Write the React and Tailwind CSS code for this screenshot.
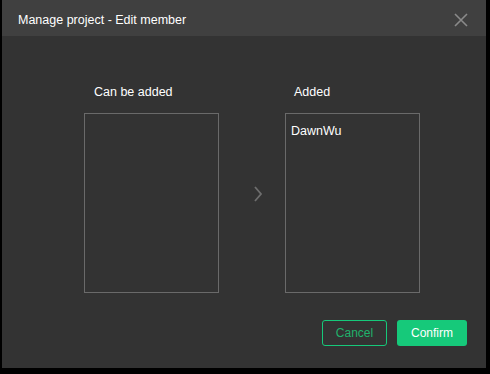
import React from "react";

export default function App() {
  return (
    <div className="w-[490px] h-[374px] bg-black" style={{ fontFamily: '"Liberation Sans", Arial, sans-serif' }}>
      <div className="ml-[2px] w-[484px] h-[368px] bg-[#333333] flex flex-col">
        <div className="h-[36px] bg-[#404040] flex items-center justify-between pl-[16px] pr-[18px] pt-[4px]">
          <span className="text-[12.5px] text-white">Manage project - Edit member</span>
          <svg width="14" height="14" viewBox="0 0 14 14" className="text-[#8a8a8a]">
            <path d="M1 1L13 13M13 1L1 13" stroke="currentColor" strokeWidth="1.6" />
          </svg>
        </div>
        <div className="flex pt-[50px] pl-[82px]">
          <div className="flex flex-col">
            <div className="h-[13px] leading-[13px] pl-[10px] text-[12.5px] text-white">Can be added</div>
            <div className="mt-[14px] w-[135px] h-[180px] border border-[#6a6a6a]"></div>
          </div>
          <div className="ml-[34px] pt-[99px]">
            <svg width="10" height="18" viewBox="0 0 10 18" className="text-[#6e6e6e] block">
              <path d="M2 2L8 9L2 16" stroke="currentColor" strokeWidth="1.8" fill="none" />
            </svg>
          </div>
          <div className="ml-[22px] flex flex-col">
            <div className="h-[13px] leading-[13px] pl-[9px] text-[12.5px] text-white">Added</div>
            <div className="mt-[14px] w-[135px] h-[180px] border border-[#6a6a6a] pt-[10px] pl-[5px]">
              <div className="text-[12.5px] leading-[15px] text-white">DawnWu</div>
            </div>
          </div>
        </div>
        <div className="flex justify-end gap-[10px] pr-[19px] mt-[27px]">
          <button className="w-[65px] h-[26px] rounded-[3px] border border-[#16c97a] text-[#1fb26b] text-[12px]">Cancel</button>
          <button className="w-[70px] h-[26px] rounded-[3px] bg-[#16c97a] text-white text-[12px]">Confirm</button>
        </div>
      </div>
    </div>
  );
}
